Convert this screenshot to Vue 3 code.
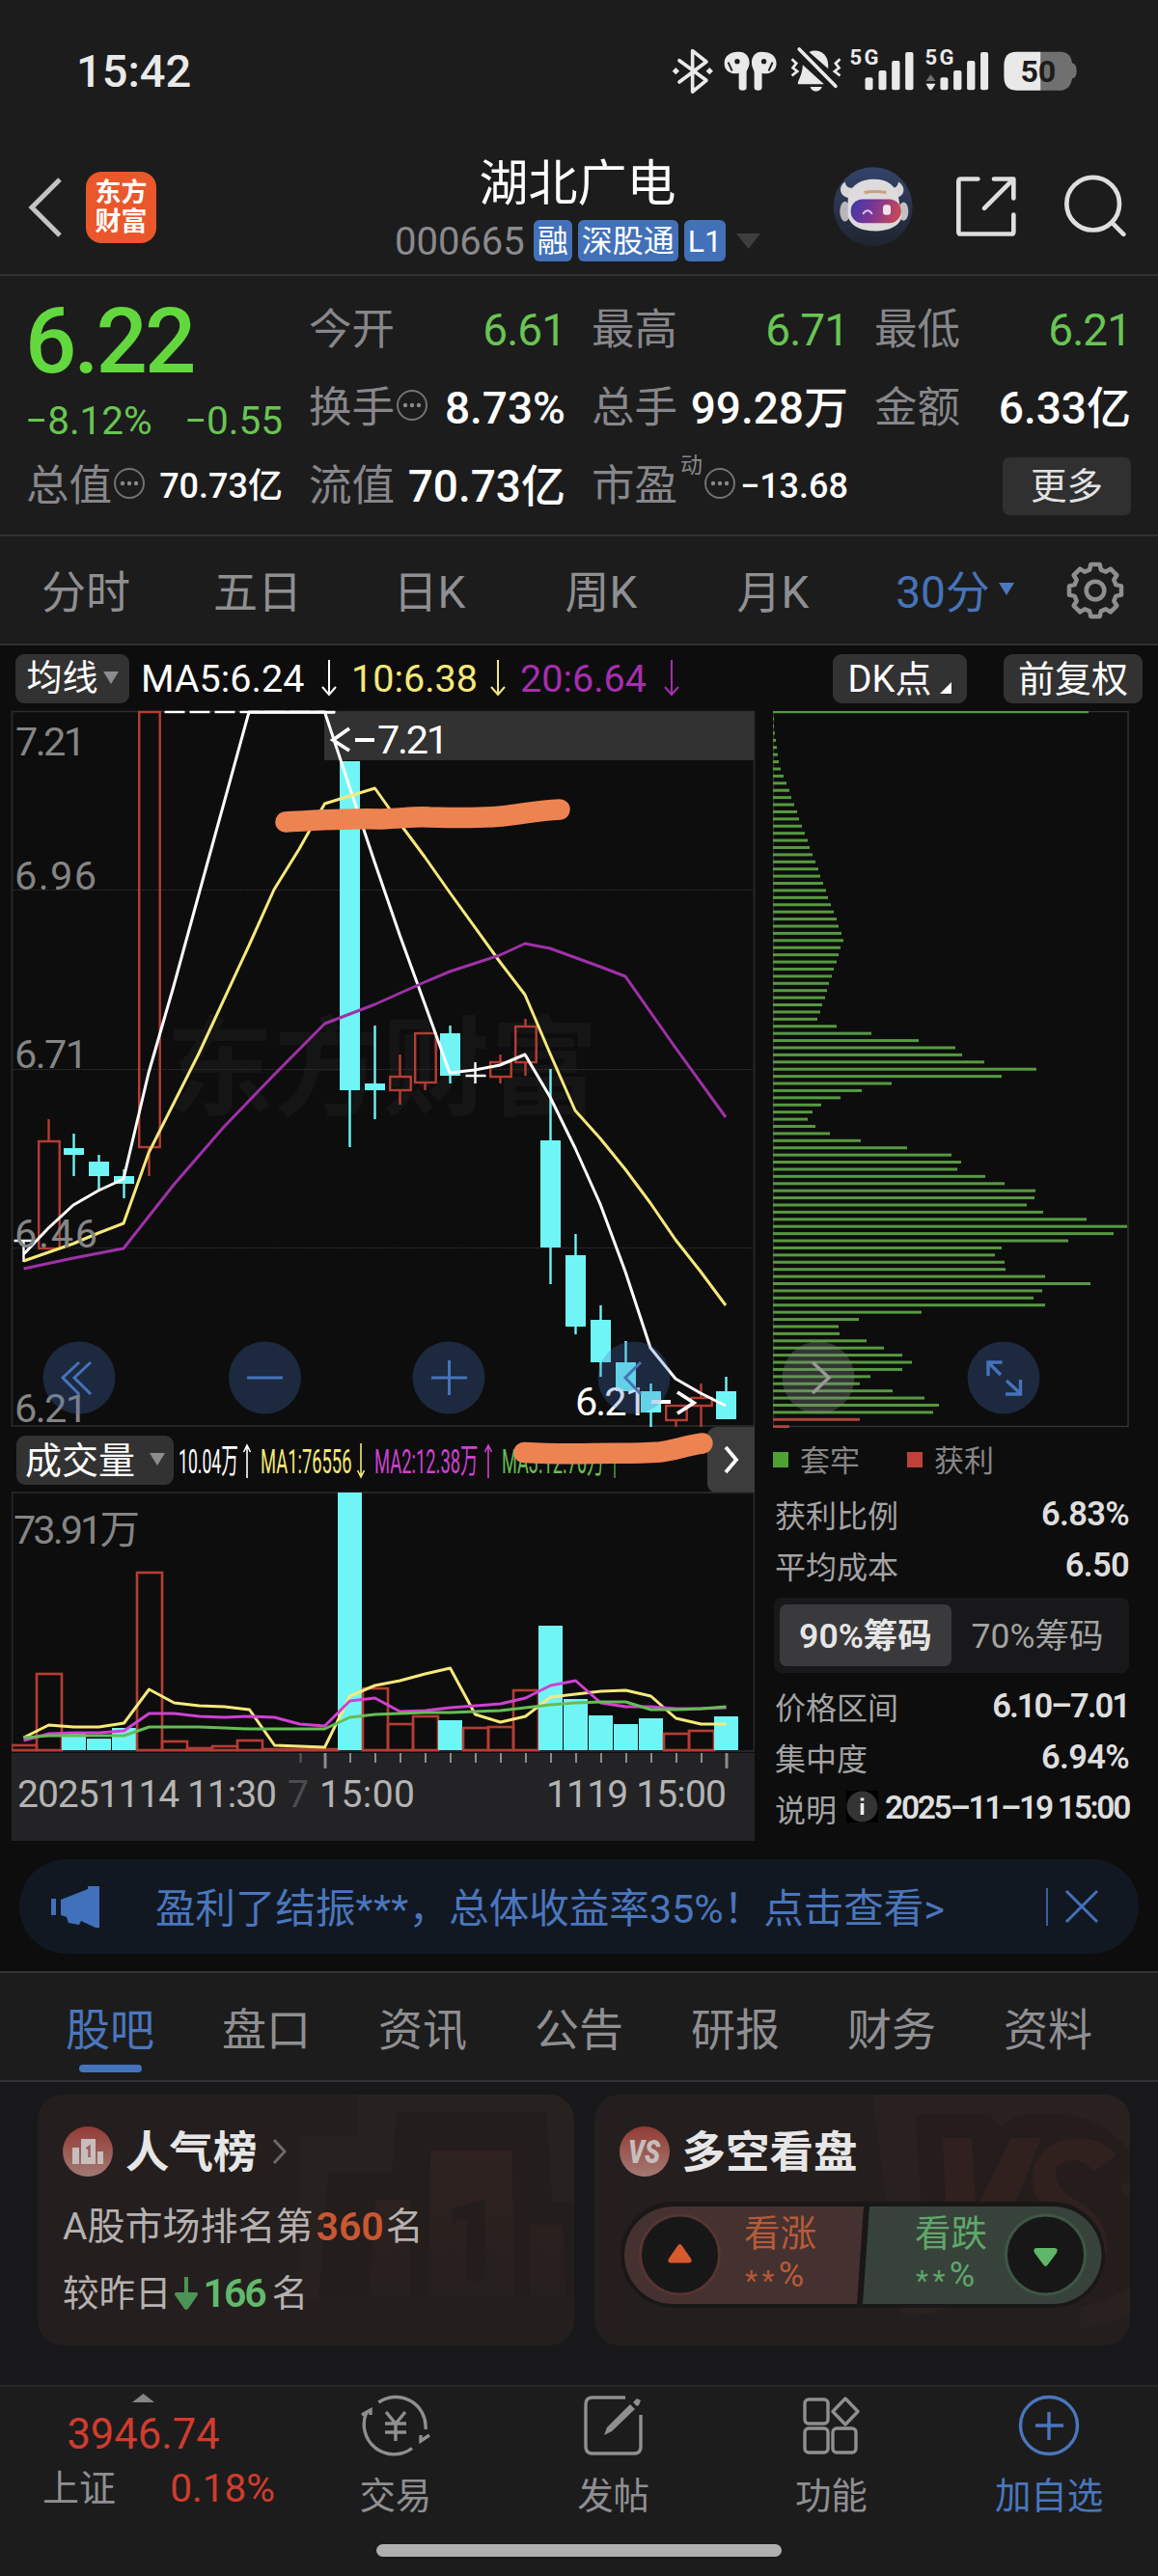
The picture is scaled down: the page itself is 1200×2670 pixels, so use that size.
<!-- StockDetail.vue -->
<template>
<div class="page">
    <!-- 狀態列 -->
    <div class="status-bar">
        <span class="clock">15:42</span>
        <svg class="status-icons" viewBox="40 80 1270 150">
            <g fill="none" stroke="#e9e9e9" stroke-width="11" stroke-linejoin="round" stroke-linecap="round">
                <path d="M70 124 L154 186 L111 221 V94 L154 128 L70 191" />
            </g>
            <path d="M48 157 l11 -11 11 11 -11 11z M153 157 l11 -11 11 11 -11 11z" fill="#e9e9e9" />
            <g fill="#e9e9e9">
                <path d="M210 133 C210 105 235 97 256 97 C276 97 288 112 288 130 C288 145 280 152 279 160 V208 Q279 217 267 217 Q255 217 255 208 V163 C240 168 210 162 210 133z" />
                <path d="M372 133 C372 105 347 97 326 97 C306 97 295 112 295 130 C295 145 302 152 303 160 V208 Q303 217 315 217 Q327 217 327 208 V163 C342 168 372 162 372 133z" />
                <circle cx="250" cy="127" r="8" fill="#1c1c1c" />
                <circle cx="333" cy="127" r="8" fill="#1c1c1c" />
                <path d="M222 130 L234 156 M360 130 L348 156" stroke="#1c1c1c" stroke-width="6" />
                <path d="M454 138 L520 198 H440 C434 192 452 176 454 138z" />
                <path d="M474 98 C502 84 533 104 533 138 V150z" />
                <path d="M477 206 H514 Q508 220 495 220 Q482 220 477 206z" />
                <path d="M443 89 L556 204" stroke="#e9e9e9" stroke-width="11" stroke-linecap="round" />
                <path d="M420 120 L434 133 L423 147 L437 158 L420 171 M570 120 L556 133 L567 147 L553 158 L570 171" fill="none" stroke="#e9e9e9" stroke-width="8" />
                <rect x="648" y="177" width="24" height="39" rx="6" />
                <rect x="690" y="155" width="24" height="61" rx="6" />
                <rect x="731" y="125" width="25" height="91" rx="6" />
                <rect x="773" y="98" width="25" height="118" rx="6" />
                <rect x="882" y="177" width="24" height="39" rx="6" />
                <rect x="923" y="155" width="25" height="61" rx="6" />
                <rect x="965" y="125" width="25" height="91" rx="6" />
                <rect x="1007" y="98" width="24" height="118" rx="6" />
                <path d="M837 188 L852 168 L867 188z" fill="#707070" />
                <path d="M837 196 H867 L858 212 Q852 221 846 212z" />
                <text x="600" y="136" class="net" textLength="90">5G</text>
                <text x="834" y="136" class="net" textLength="90">5G</text>
            </g>
            <path d="M1194 97 H1256 Q1288 97 1292 132 Q1306 134 1306 157 Q1306 178 1292 180 Q1286 217 1256 217 H1194z" fill="#707070" />
            <path d="M1194 97 H1118 Q1080 97 1080 140 V174 Q1080 217 1118 217 H1194z" fill="#e9e9e9" />
            <text x="1131" y="191" class="battery" textLength="111" lengthAdjust="spacingAndGlyphs">50</text>
        </svg>
    </div>

    <!-- 標題 -->
    <div class="header">
        <div class="header-left">
            <svg class="back" viewBox="0 0 36 62"><path d="M33 2 L4 31 L33 60" fill="none" stroke="#c4c4c4" stroke-width="5" /></svg>
            <div class="logo"><span>东方</span><span>财富</span></div>
        </div>
        <div class="header-title">
            <div class="stock-name">湖北广电</div>
            <div class="stock-sub">
                <span class="stock-code">000665</span>
                <span class="tag">融</span>
                <span class="tag">深股通</span>
                <span class="tag">L1</span>
                <svg class="drop" viewBox="0 0 25 16"><path d="M0 0 H25 L12.5 16z" fill="#3e3e3e" /></svg>
            </div>
        </div>
        <svg class="header-icons" viewBox="550 450 912 260">
            <defs>
                <linearGradient id="avatarBg" x1="0" y1="0" x2="0" y2="1">
                    <stop offset="0" stop-color="#33436a" />
                    <stop offset="1" stop-color="#1f242e" />
                </linearGradient>
                <linearGradient id="visor" x1="0" y1="0" x2="1" y2="0.2">
                    <stop offset="0" stop-color="#3a3aa8" />
                    <stop offset="0.5" stop-color="#7a3596" />
                    <stop offset="1" stop-color="#c2475a" />
                </linearGradient>
            </defs>
            <circle cx="675" cy="579" r="123" fill="url(#avatarBg)" />
            <path d="M588 502 C568 515 568 545 600 552 L616 520 C598 524 590 515 588 502z M754 502 C776 515 778 545 746 552 L728 520 C746 524 752 515 754 502z" fill="#d9d6d8" />
            <ellipse cx="588" cy="594" rx="16" ry="31" fill="#b9b6ba" />
            <ellipse cx="770" cy="594" rx="15" ry="29" fill="#c4c1c5" />
            <path d="M597 560 C600 515 635 494 678 494 C722 494 750 515 756 560 L764 610 C760 640 720 655 682 655 C640 655 605 640 597 610z" fill="#dedbdc" />
            <rect x="606" y="556" width="156" height="74" rx="36" fill="url(#visor)" />
            <path d="M648 535 Q682 529 716 535" stroke="#c9a07c" stroke-width="9" fill="none" />
            <path d="M645 600 Q658 583 671 600" stroke="#d9c9f0" stroke-width="6" fill="none" stroke-linecap="round" />
            <rect x="706" y="573" width="24" height="32" rx="9" fill="#f1e3ee" />
            <g fill="none" stroke="#dedede" stroke-width="14" stroke-linecap="round" stroke-linejoin="round">
                <path d="M1001 493 H948 Q941 493 941 500 V657 Q941 664 948 664 H1105 Q1112 664 1112 657 V604" />
                <path d="M1051 493 H1112 V553" />
                <path d="M1021 584 L1110 495" />
                <circle cx="1359" cy="570" r="82" />
                <path d="M1419 630 L1454 665" />
            </g>
        </svg>
    </div>

    <!-- 報價 -->
    <div class="quote">
        <div class="price-cell">
            <div class="price">6.22</div>
            <div class="change"><span>−8.12%</span><span>−0.55</span></div>
        </div>
        <div v-for="item in quotes" :key="item.label" class="quote-cell">
            <span class="quote-label">{{ item.label }}</span>
            <sup v-if="item.sup" class="quote-sup">{{ item.sup }}</sup>
            <svg v-if="item.dots" class="dots" viewBox="0 0 34 34">
                <circle cx="17" cy="17" r="15" fill="none" stroke="#737377" stroke-width="2" />
                <circle cx="10" cy="17" r="2.2" fill="#8a8a8e" />
                <circle cx="17" cy="17" r="2.2" fill="#8a8a8e" />
                <circle cx="24" cy="17" r="2.2" fill="#8a8a8e" />
            </svg>
            <span class="quote-value" :class="{ down: item.down, small: item.small }">{{ item.value }}</span>
        </div>
        <div class="more-cell"><span class="more">更多</span></div>
    </div>

    <!-- 週期 -->
    <div class="periods">
        <span v-for="p in periods" :key="p" class="period">{{ p }}</span>
        <span class="period active">30分
            <svg class="period-arrow" viewBox="0 0 16 13"><path d="M0 0 H16 L8 13z" fill="#4a78c0" /></svg>
        </span>
        <svg class="gear" viewBox="0 0 60 60">
            <path :d="gearPath" fill="none" stroke="#8f8f92" stroke-width="4.4" stroke-linejoin="round" />
            <circle cx="30" cy="30" r="9" fill="none" stroke="#8f8f92" stroke-width="4.4" />
        </svg>
    </div>

    <!-- 均線 -->
    <div class="ma-row">
        <span class="chip chip-ma">均线<svg class="chip-arrow" viewBox="0 0 16 13"><path d="M0 0 H16 L8 13z" fill="#8c8c90" /></svg></span>
        <span class="ma ma5">MA5:6.24</span>
        <svg class="ma-arrow" viewBox="0 0 16 38"><path d="M8 0 V36 M1 28 L8 36 L15 28" stroke="#fff" fill="none" stroke-width="2" /></svg>
        <span class="ma ma10">10:6.38</span>
        <svg class="ma-arrow" viewBox="0 0 16 38"><path d="M8 0 V36 M1 28 L8 36 L15 28" stroke="#f5e979" fill="none" stroke-width="2" /></svg>
        <span class="ma ma20">20:6.64</span>
        <svg class="ma-arrow" viewBox="0 0 16 38"><path d="M8 0 V36 M1 28 L8 36 L15 28" stroke="#a62fae" fill="none" stroke-width="2" /></svg>
        <span class="chip chip-dk">DK点<svg class="corner" viewBox="0 0 12 12"><path d="M12 0 V12 H0z" fill="#fff" /></svg></span>
        <span class="chip chip-fq">前复权</span>
    </div>

    <!-- 圖表 -->
    <div class="charts">
        <div class="chart-left">
            <svg class="kline" viewBox="12 737 770 743">
                <text x="172" y="1148" class="watermark" textLength="448">东方财富</text>
                <g stroke="#2e2e2e" stroke-width="1" stroke-dasharray="2 1">
                    <path d="M12 922.5 H781 M12 1108.5 H781 M12 1293.5 H781" />
                </g>
                <rect x="12.5" y="737.5" width="769" height="740.5" fill="none" stroke="#2c2c2c" stroke-width="1.6" />
                <rect x="336" y="738" width="445" height="50" fill="#323232" />
                <g v-for="(c, i) in candles" :key="i">
                    <template v-if="c[0] === 'u'">
                        <path :d="`M${cx(i)} ${c[3]} V${c[1]} M${cx(i)} ${c[2]} V${c[4]}`" stroke="#b53d33" stroke-width="2.4" />
                        <rect :x="cx(i) - 10.3" :y="c[1] + 1" width="21.5" :height="c[2] - c[1] - 2" fill="none" stroke="#b53d33" stroke-width="2.4" />
                    </template>
                    <template v-else-if="c[0] === 'd'">
                        <path :d="`M${cx(i)} ${c[3]} V${c[4]}`" stroke="#70f5f7" stroke-width="2.4" />
                        <rect :x="cx(i) - 10.5" :y="c[1]" width="21" :height="c[2] - c[1]" fill="#70f5f7" />
                    </template>
                    <path v-else :d="`M${cx(i) - 10} ${c[1]} h21 M${cx(i)} ${c[3]} V${c[4]}`" stroke="#fff" stroke-width="2.4" />
                </g>
                <g fill="none" stroke-width="3" stroke-linejoin="round">
                    <polyline :points="ma5" stroke="#fff" />
                    <polyline :points="ma10" stroke="#f7e97a" />
                    <polyline :points="ma20" stroke="#9f31a8" />
                </g>
                <path d="M258 738.5 H347" stroke="#fff" stroke-width="2.4" />
                <g class="axis">
                    <text x="16" y="783" textLength="73">7.21</text>
                    <text x="15" y="922" textLength="85">6.96</text>
                    <text x="15" y="1107" textLength="76">6.71</text>
                    <text x="15" y="1293" textLength="86">6.46</text>
                    <text x="15" y="1474" textLength="76">6.21</text>
                </g>
                <g class="mark">
                    <text x="391" y="781" textLength="74">7.21</text>
                    <text x="596" y="1467" textLength="75">6.21</text>
                    <path d="M362 755 L345 767 L362 778 M368 767 H388 M675 1453 H695 M702 1443 L719 1454 L702 1465" fill="none" stroke="#fff" stroke-width="3.8" />
                </g>
                <g v-for="x in [82, 274.5, 465, 657]" :key="x">
                    <circle :cx="x" cy="1428" r="37.5" fill="#4474be" fill-opacity="0.28" />
                </g>
                <g fill="none" stroke="#4573ba" stroke-width="3">
                    <path d="M82 1412 L65 1428 L82 1445 M94 1412 L77 1428 L94 1445" />
                    <path d="M256 1428 H293 M447 1428 H484 M465.5 1410 V1446" />
                    <path d="M664 1412 L648 1428 L664 1445" />
                </g>
            </svg>

            <div class="volume-row">
                <span class="chip chip-vol">成交量<svg class="chip-arrow" viewBox="0 0 16 13"><path d="M0 0 H16 L8 13z" fill="#8c8c90" /></svg></span>
                <svg class="volume-labels" viewBox="180 1480 553 66">
                    <text transform="translate(185 1527) scale(0.49 1)" fill="#fff">10.04万</text>
                    <text transform="translate(270 1527) scale(0.51 1)" fill="#f5e979">MA1:76556</text>
                    <text transform="translate(388 1527) scale(0.51 1)" fill="#cf41d2">MA2:12.38万</text>
                    <text transform="translate(520 1527) scale(0.505 1)" fill="#65bd55">MA3:12.70万</text>
                    <g fill="none" stroke-width="1.6">
                        <path d="M256 1532 V1498 M252.500 1505 L256 1498 L259.500 1505" stroke="#fff" />
                        <path d="M374 1496 V1531 M370.500 1524 L374 1531 L377.500 1524" stroke="#f5e979" />
                        <path d="M506 1532 V1498 M502.500 1505 L506 1498 L509.500 1505" stroke="#cf41d2" />
                        <path d="M637 1532 V1498 M633.500 1505 L637 1498 L640.500 1505" stroke="#4d8f42" />
                    </g>
                </svg>
                <span class="volume-more"><svg viewBox="0 0 16 30"><path d="M2 2 L13 15 L2 28" fill="none" stroke="#fff" stroke-width="3.8" /></svg></span>
            </div>

            <svg class="volume" viewBox="12 1546 770 362">
                <rect x="12.500" y="1547" width="769" height="268" fill="none" stroke="#2c2c2c" stroke-width="1.6" />
                <g v-for="(v, i) in volumes" :key="i">
                    <rect v-if="v[0] === 'd'" :x="12 + 26 * i" :y="v[1]" width="25" :height="1814 - v[1]" fill="#70f5f7" />
                    <rect v-else :x="12 + 26 * i" :y="v[1] + 1" width="26" :height="Math.max(1813 - v[1], 1)" fill="none" stroke="#b53d33" stroke-width="2.6" />
                </g>
                <g fill="none" stroke-width="3" stroke-linejoin="round">
                    <polyline :points="vol5" stroke="#f7e97a" />
                    <polyline :points="vol10" stroke="#cf41d2" />
                    <polyline :points="vol20" stroke="#65bd55" />
                </g>
                <text x="14" y="1600" class="axis" textLength="131">73.91万</text>
                <rect x="12" y="1817" width="770" height="91" fill="#232325" />
                <path d="M311.500 1817 V1827" stroke="#5a5a5a" stroke-width="2" />
                <path v-for="k in 15" :key="k" :d="`M${337 + 26 * k} 1817 V1827`" stroke="#8c8c8c" stroke-width="2" />
                <path d="M337 1817 V1833 M753 1817 V1833" stroke="#8c8c8c" stroke-width="3" />
                <g class="time">
                    <text x="18" y="1873" textLength="269">20251114 11:30</text>
                    <text x="298" y="1873" fill="#4c4c4e">7</text>
                    <text x="331" y="1873" textLength="99">15:00</text>
                    <text x="566" y="1873" textLength="187">1119 15:00</text>
                </g>
            </svg>

            <!-- 手繪標記 -->
            <svg class="marker" viewBox="12 737 770 1171">
                <path d="M296 852 C330 850 360 848 395 849 C420 848 430 846 445 847 C480 848 500 848 520 846 C545 843 560 840 580 839" />
                <path d="M543 1505.500 C570 1507 590 1507 615 1506.500 C640 1506 660 1507 684 1505 C700 1503 712 1498 728 1496" />
            </svg>
        </div>

        <div class="chart-right">
            <svg class="chips" viewBox="801 737 369 743">
                <rect x="801.500" y="737.500" width="367.500" height="741" fill="none" stroke="#333" stroke-width="1.4" />
                <rect
                    v-for="(w, i) in chipBars"
                    :key="i"
                    x="801"
                    :y="736.200 + 7.41 * i"
                    :width="w"
                    height="3"
                    :fill="i > 98 ? '#b0453b' : '#569a40'"
                />
                <circle cx="848" cy="1428" r="37.500" fill="#8a8a8a" fill-opacity="0.32" />
                <path d="M842 1412 L859 1428 L842 1444" fill="none" stroke="#9a9a9a" stroke-width="3.400" />
                <circle cx="1040" cy="1428" r="37.500" fill="#4474be" fill-opacity="0.28" />
                <path d="M1024 1426 V1412 H1038.500 M1025 1413 L1037 1425 M1057.500 1430 V1445 H1042 M1057 1444 L1043 1431" fill="none" stroke="#4573ba" stroke-width="3.400" />
            </svg>
            <div class="legend">
                <i class="green"></i><span>套牢</span>
                <i class="red"></i><span>获利</span>
            </div>
            <div class="stat"><span>获利比例</span><b>6.83%</b></div>
            <div class="stat"><span>平均成本</span><b>6.50</b></div>
            <div class="switch">
                <span class="switch-item on">90%筹码</span>
                <span class="switch-item">70%筹码</span>
            </div>
            <div class="stat"><span>价格区间</span><b class="range">6.10–7.01</b></div>
            <div class="stat"><span>集中度</span><b>6.94%</b></div>
            <div class="stat">
                <span>说明</span>
                <svg class="info" viewBox="0 0 33 33">
                    <rect width="33" height="33" fill="#000" />
                    <circle cx="16.500" cy="16.500" r="16" fill="#343434" />
                    <path d="M16.500 13 V25 M16.500 7.500 V10.500" stroke="#eee" stroke-width="3.600" />
                </svg>
                <b class="date">2025–11–19 15:00</b>
            </div>
        </div>
    </div>

    <!-- 公告條 -->
    <div class="notice-wrap">
        <div class="notice">
            <svg class="horn" viewBox="0 0 50 43">
                <path d="M0 13 H5 V30 H0z M10 14 L38 3 V0 H50 V43 H46 L31 36 L29 40 L18 38 L16 32 L10 30z" fill="#4271bb" />
            </svg>
            <span class="notice-text">盈利了结振<span class="stars">***</span>，总体收益率35%！点击查看&gt;</span>
            <i class="notice-line"></i>
            <svg class="close" viewBox="0 0 36 36"><path d="M2 2 L34 34 M34 2 L2 34" stroke="#4271bb" stroke-width="3" /></svg>
        </div>
    </div>

    <!-- 分頁 -->
    <div class="tabs">
        <span v-for="(t, i) in tabs" :key="t" class="tab" :class="{ active: i === 0 }">{{ t }}</span>
    </div>

    <!-- 卡片 -->
    <div class="cards">
        <div class="card">
            <svg class="card-bg" viewBox="39 2171 555 260">
                <path d="M310 2213 H370 V2171 H594 V2384 H310z" fill="#272120" />
                <path d="M340 2252 H406 L411 2189 H566 L572 2282 H594 V2384 H330z" fill="#231d1c" />
                <path d="M389 2280 H425 V2384 H382z M446 2229 H530 L533 2384 H443z M549 2306 H583 L586 2384 H549z" fill="url(#podium)" />
                <path d="M468 2290 L502 2279 V2365 H484 V2299 L468 2304z" fill="#231d1c" />
            </svg>
            <div class="card-title">
                <svg class="card-icon" viewBox="0 0 52 52">
                    <defs>
                        <linearGradient id="redBall" x1="0" y1="0" x2="0" y2="1">
                            <stop offset="0" stop-color="#933b35" />
                            <stop offset="1" stop-color="#a37973" />
                        </linearGradient>
                        <linearGradient id="podium" x1="0" y1="0" x2="0" y2="1">
                            <stop offset="0" stop-color="#2f2220" />
                            <stop offset="1" stop-color="#251f1e" />
                        </linearGradient>
                    </defs>
                    <circle cx="26" cy="26" r="26" fill="url(#redBall)" />
                    <path d="M10 22 H17 V39 H10z M19 13 H34 V39 H19z M36 26 H42 V39 H36z" fill="#c6bebc" />
                    <path d="M24.500 23 L27.500 21 V32" fill="none" stroke="#9a5d57" stroke-width="2.500" />
                </svg>
                <span>人气榜</span>
                <svg class="card-arrow" viewBox="0 0 16 26"><path d="M2 1 L13 13 L2 25" fill="none" stroke="#6c6868" stroke-width="3" /></svg>
            </div>
            <div class="card-line">A股市场排名第<b class="orange">360</b>名</div>
            <div class="card-line second">较昨日<svg class="down-arrow" viewBox="0 0 24 34"><path d="M10 0 H14 V16 H23 Q25 18 23 20 L14 33 Q12 35 10 33 L1 20 Q-1 18 1 16 H10z" fill="#4c9356" /></svg><b class="lime">166</b>名</div>
        </div>
        <div class="card">
            <svg class="card-bg" viewBox="615 2171 556 260">
                <path d="M903 2171 H1171 V2398 Q1150 2410 1119 2414 V2330 H1040 L975 2397 L933 2400z" fill="#282120" />
                <path d="M948 2192 H1025 L1036 2205 Q1050 2190 1080 2190 Q1140 2190 1171 2230 V2260 Q1150 2268 1171 2280 V2370 Q1150 2385 1119 2390 H960z" fill="#241d1c" />
                <path d="M976 2216 H1006 L1011 2290 L1047 2216 H1078 L1022 2360 H984z" fill="#30211f" />
                <path d="M1156 2234 L1133 2250 Q1115 2230 1095 2245 Q1088 2262 1110 2278 Q1152 2300 1146 2335 Q1130 2370 1080 2360 L1062 2310 Q1080 2330 1100 2318 Q1106 2305 1090 2295 Q1062 2275 1072 2243 Q1085 2216 1120 2216 Q1145 2218 1156 2234z" fill="#30211f" />
            </svg>
            <div class="card-title">
                <svg class="card-icon" viewBox="0 0 52 52">
                    <circle cx="26" cy="26" r="26" fill="url(#redBall)" />
                    <text x="9" y="38" class="vs" textLength="33" lengthAdjust="spacingAndGlyphs">VS</text>
                </svg>
                <span>多空看盘</span>
            </div>
            <svg class="vote" viewBox="642 2282 502 110">
                <rect x="642" y="2282" width="502" height="110" rx="55" fill="#191717" />
                <path d="M894 2287 L887 2388 H696.500 A50.500 50.500 0 0 1 696.500 2287z" fill="#453130" />
                <path d="M900 2287 L893 2388 H1090 A50.500 50.500 0 0 0 1090 2287z" fill="#37433a" />
                <circle cx="703.500" cy="2337" r="41" fill="#171718" stroke="#553532" stroke-width="3" />
                <circle cx="1082.500" cy="2337" r="41" fill="#171718" stroke="#3e5745" stroke-width="3" />
                <path d="M701 2328 Q703.500 2324 706 2328 L715 2341 Q717 2345 713 2345.500 H694 Q690 2345 692 2341z" fill="#d65b2c" />
                <path d="M1080 2347 Q1082.500 2351 1085 2347 L1094 2335 Q1096 2330.500 1092 2330 H1073 Q1069 2330.500 1071 2335z" fill="#5fb668" />
                <g class="vote-text">
                    <text x="770" y="2328" fill="#b65b38">看涨</text>
                    <text x="771" y="2370" fill="#b65b38" class="pct"><tspan dy="4" class="pct-star">**</tspan><tspan dy="-4">%</tspan></text>
                    <text x="947" y="2328" fill="#5fa76a">看跌</text>
                    <text x="948" y="2370" fill="#5fa76a" class="pct"><tspan dy="4" class="pct-star">**</tspan><tspan dy="-4">%</tspan></text>
                </g>
            </svg>
        </div>
    </div>

    <!-- 底部導航 -->
    <div class="bottom">
        <div class="nav">
            <div class="index">
                <svg class="index-up" viewBox="0 0 23 9"><path d="M0 9 H23 L11.500 0z" fill="#858585" /></svg>
                <div class="index-value">3946.74</div>
                <div class="index-row"><span>上证</span><span class="index-pct">0.18%</span></div>
            </div>
            <div class="nav-item">
                <svg viewBox="0 0 72 72">
                    <path d="M18.400 12 A31 31 0 0 1 67 40 M53 59.500 A31 31 0 0 1 6 22" />
                    <path d="M1 25 L10 20 V25 M71 46 L62 52 V46" />
                    <path d="M26 22 L36 34 L46 22 M36 34 V52 M25 34 H47 M25 43 H47" />
                </svg>
                <span>交易</span>
            </div>
            <div class="nav-item">
                <svg viewBox="0 0 72 72">
                    <path d="M48 7 H14 Q7 7 7 14 V58 Q7 65 14 65 H57 Q64 65 64 58 V25" />
                    <path d="M26 46 L29 38 L53 14 L58 19 L34 42z M56 12 L60 8 L64 10 L62 15 L60 16z" class="solid" />
                </svg>
                <span>发帖</span>
            </div>
            <div class="nav-item">
                <svg viewBox="0 0 72 72">
                    <rect x="9" y="9" width="24" height="25" rx="4" />
                    <rect x="9" y="39" width="24" height="25" rx="4" />
                    <rect x="38" y="39" width="24" height="25" rx="4" />
                    <path d="M51 8 L64 21.500 L51 35 L38 21.500z" stroke-linejoin="round" />
                </svg>
                <span>功能</span>
            </div>
            <div class="nav-item blue">
                <svg viewBox="0 0 72 72">
                    <circle cx="36" cy="36" r="29.500" />
                    <path d="M22 36 H51 M36 22 V51" />
                </svg>
                <span>加自选</span>
            </div>
        </div>
        <div class="home-bar"></div>
    </div>
</div>
</template>

<script setup>
const quotes = [
    { label: '今开', value: '6.61', down: true },
    { label: '最高', value: '6.71', down: true },
    { label: '最低', value: '6.21', down: true },
    { label: '换手', value: '8.73%', dots: true },
    { label: '总手', value: '99.28万' },
    { label: '金额', value: '6.33亿' },
    { label: '总值', value: '70.73亿', dots: true, small: true },
    { label: '流值', value: '70.73亿' },
    { label: '市盈', value: '−13.68', sup: '动', dots: true, small: true }
]

const periods = ['分时', '五日', '日K', '周K', '月K']
const tabs = ['股吧', '盘口', '资讯', '公告', '研报', '财务', '资料']

// K 線中心 x
const cx = (i) => 24.5 + 26 * i

// [類型, 實體上, 實體下, 影線上, 影線下]
const candles = [
    ['x', 1286, 1286, 1286, 1308],
    ['u', 1182, 1295, 1160, 1295],
    ['d', 1190, 1197, 1175, 1219],
    ['d', 1204, 1219, 1197, 1233],
    ['d', 1219, 1227, 1212, 1242],
    ['u', 737, 1190, 737, 1219],
    ['x', 738, 738, 738, 738],
    ['x', 738, 738, 738, 738],
    ['x', 738, 738, 738, 738],
    ['x', 738, 738, 738, 738],
    ['x', 738, 738, 738, 738],
    ['x', 738, 738, 738, 738],
    ['x', 738, 738, 738, 738],
    ['d', 789, 1130, 789, 1189],
    ['d', 1123, 1130, 1063, 1160],
    ['u', 1115, 1131, 1093, 1145],
    ['u', 1070, 1123, 1070, 1130],
    ['d', 1071, 1115, 1063, 1123],
    ['x', 1115, 1115, 1101, 1123],
    ['u', 1100, 1117, 1093, 1123],
    ['u', 1063, 1102, 1056, 1115],
    ['d', 1182, 1293, 1108, 1331],
    ['d', 1301, 1375, 1279, 1383],
    ['d', 1368, 1412, 1353, 1427],
    ['d', 1412, 1442, 1390, 1442],
    ['d', 1442, 1464, 1434, 1479],
    ['u', 1456, 1473, 1456, 1479],
    ['u', 1448, 1458, 1434, 1479],
    ['d', 1442, 1471, 1427, 1471]
]

const ma5 = '24.500,1300 50,1273 76,1249 102,1234 128,1222 154,1112 180,1022 206,927 258,738 336.500,738 362,815 388,893 414.500,970 440,1040 466,1112 492,1109 518,1104 544,1093 570,1137 596,1190 622,1248 648,1318 674,1397 700,1429 726,1444 752,1457'
const ma10 = '24.500,1307 76,1289 102,1278 128,1268 154,1195 206,1092 258,980 284,922 310,880 336.500,833 388.500,817 414,853 440,888 466,925 518,997 544,1031 570,1092 596,1151 622,1180 648,1212 674,1247 700,1285 726,1318 752,1353'
const ma20 = '24.500,1315 76,1304 128,1294 180,1228 232,1168 284,1114 336.500,1061 388.500,1041 440,1018 466,1007 518,990 544,978 570,983 622,1002 648,1012 700,1086 752,1158'

const volumes = [
    ['u', 1808], ['u', 1734], ['d', 1797], ['d', 1802], ['d', 1791], ['u', 1629],
    ['u', 1804], ['u', 1811], ['u', 1809], ['u', 1803], ['u', 1812], ['u', 1812],
    ['u', 1812], ['d', 1547], ['u', 1749], ['u', 1786], ['u', 1778], ['d', 1783],
    ['u', 1790], ['u', 1789], ['u', 1751], ['d', 1685], ['d', 1761], ['d', 1778],
    ['d', 1787], ['d', 1781], ['u', 1796], ['u', 1793], ['d', 1779]
]

const toPoints = (ys) => ys.map((y, i) => `${cx(i)},${y}`).join(' ')
const vol5 = toPoints([1801, 1788, 1790, 1790, 1786, 1751, 1765, 1768, 1769, 1772, 1809, 1810, 1811, 1758, 1747, 1742, 1735, 1729, 1777, 1785, 1779, 1759, 1756, 1753, 1752, 1758, 1781, 1787, 1787])
const vol10 = toPoints([1804, 1797, 1796, 1796, 1794, 1776, 1776, 1779, 1780, 1779, 1780, 1787, 1789, 1763, 1760, 1774, 1773, 1770, 1768, 1766, 1760, 1747, 1742, 1765, 1769, 1769, 1771, 1771, 1770])
const vol20 = toPoints([1801, 1799, 1799, 1799, 1799, 1790, 1790, 1790, 1791, 1792, 1792, 1792, 1792, 1780, 1777, 1776, 1775, 1775, 1774, 1773, 1770, 1767, 1765, 1764, 1764, 1772, 1772, 1771, 1769])

// 籌碼分布
const chipBars = [
    327, 1, 1, 2, 3, 4, 5, 6, 8, 11, 14, 17, 19, 22, 25, 27, 30, 33, 36, 38,
    41, 44, 47, 49, 52, 55, 57, 60, 63, 66, 68, 71, 73, 70, 68, 66, 63, 61, 58, 56,
    54, 51, 49, 46, 66, 102, 151, 189, 196, 219, 273, 237, 123, 92, 70, 50, 41, 36, 44, 59,
    91, 139, 185, 195, 191, 220, 240, 272, 271, 263, 280, 325, 367, 353, 306, 237, 230, 240, 241, 282,
    329, 279, 270, 282, 154, 89, 68, 69, 97, 115, 134, 144, 134, 101, 90, 124, 157, 172, 166, 90, 17
]

// 齒輪外框
const gearPath = (() => {
    const pts = []
    for (let i = 0; i < 8; i++) {
        const a = (i * Math.PI) / 4 - Math.PI / 2
        for (const [r, d] of [[21.5, -0.27], [26.5, -0.17], [26.5, 0.17], [21.5, 0.27]]) {
            pts.push(`${(30 + r * Math.cos(a + d)).toFixed(1)} ${(30 + r * Math.sin(a + d)).toFixed(1)}`)
        }
    }
    return `M${pts.join(' L')} Z`
})()
</script>

<style>
body {
margin: 0;
background: #1c1c1c;
}
</style>

<style scoped>
.page {
width: 1200px;
height: 2670px;
overflow: hidden;
background: #1c1c1c;
color: #fff;
font-family: Roboto, "Noto Sans CJK SC", sans-serif;
}

.page * {
box-sizing: border-box;
}

svg {
display: block;
flex: none;
}

.status-bar {
height: 145px;
padding: 0 83px 0 79px;
display: flex;
align-items: center;
justify-content: space-between;
}

.clock {
font-size: 47px;
font-weight: 500;
line-height: 60px;
color: #e9e9e9;
padding-top: 2px;
}

.status-icons {
width: 423px;
height: 50px;
}

.net {
font-size: 66px;
font-weight: 700;
}

.battery {
font-size: 92px;
font-weight: 700;
fill: #1c1c1c;
}

.header {
height: 141px;
padding: 0 33px 0 29px;
border-bottom: 2px solid #303030;
display: grid;
grid-template-columns: 1fr auto 1fr;
align-items: center;
}

.header-left {
display: flex;
align-items: center;
gap: 24px;
}

.back {
width: 36px;
height: 62px;
}

.logo {
width: 73px;
height: 74px;
border-radius: 16px;
background: #e9572b;
display: flex;
flex-direction: column;
align-items: center;
justify-content: center;
font-size: 27px;
font-weight: 700;
line-height: 30px;
}

.header-title {
display: flex;
flex-direction: column;
align-items: center;
gap: 6px;
padding: 4px 0 0 1px;
}

.stock-name {
font-size: 51px;
line-height: 60px;
}

.stock-sub {
display: flex;
align-items: center;
gap: 6px;
}

.stock-code {
font-size: 40px;
line-height: 43px;
color: #8a8a8e;
padding: 2px 3px 0 0;
}

.tag {
height: 43px;
line-height: 44px;
padding: 0 4px;
border-radius: 6px;
background: #4271b9;
font-size: 32px;
}

.drop {
width: 25px;
height: 16px;
margin-left: 5px;
}

.header-icons {
width: 304px;
height: 87px;
justify-self: end;
}

.quote {
height: 270px;
padding: 15px 28px 0 28px;
border-bottom: 2px solid #303030;
display: grid;
grid-template-columns: repeat(4, 265px);
grid-template-rows: repeat(3, 81px);
column-gap: 28px;
}

.price-cell {
grid-row: span 2;
}

.price {
margin: 13px 0 0 -2px;
font-size: 94px;
font-weight: 500;
line-height: 80px;
letter-spacing: -3px;
color: #63d83e;
}

.change {
margin: 17px 0 0 -2px;
display: flex;
justify-content: space-between;
font-size: 40.5px;
line-height: 50px;
color: #69c553;
}

.quote-cell {
display: flex;
align-items: center;
line-height: 60px;
white-space: nowrap;
}

.quote-label {
font-size: 44.5px;
margin-left: -1px;
color: #87878b;
}

.quote-sup {
align-self: flex-start;
margin: 6px 0 0 3px;
font-size: 23px;
line-height: 28px;
color: #87878b;
}

.dots {
width: 34px;
height: 34px;
margin: -6px 0 0 1px;
}

.quote-value {
margin-left: auto;
font-size: 46px;
font-weight: 500;
}

.quote-value.down {
color: #69c553;
font-weight: 400;
letter-spacing: -1px;
}

.quote-value.small {
font-size: 36px;
}

.more-cell {
display: flex;
align-items: center;
justify-content: flex-end;
}

.more {
width: 133px;
height: 60px;
border-radius: 7px;
background: #303030;
text-align: center;
font-size: 37.5px;
line-height: 60px;
color: #e2e2e2;
}

.periods {
height: 113px;
border-bottom: 2px solid #303030;
display: flex;
align-items: center;
}

.period {
width: 178px;
padding-top: 4px;
text-align: center;
font-size: 46px;
line-height: 60px;
color: #8f8f92;
}

.period.active {
width: 202px;
display: flex;
align-items: center;
justify-content: center;
gap: 9px;
color: #4773b8;
}

.period-arrow {
width: 16px;
height: 13px;
margin: -6px 3px 0 0;
}

.gear {
width: 62px;
height: 62px;
margin-left: 12px;
}

.ma-row {
height: 68px;
padding: 0 16px;
background: #0d0d0d;
display: flex;
align-items: center;
}

.chip {
height: 51px;
border-radius: 9px;
background: #323232;
display: flex;
align-items: center;
justify-content: center;
font-size: 37px;
line-height: 50px;
padding-top: 2px;
white-space: nowrap;
}

.chip-ma {
width: 118px;
gap: 5px;
}

.chip-arrow {
width: 16px;
height: 13px;
margin-top: -4px;
}

.chip-dk {
width: 139px;
margin-left: auto;
gap: 9px;
font-size: 38px;
}

.corner {
width: 12px;
height: 12px;
margin-top: 18px;
}

.chip-fq {
width: 144px;
margin-left: 38px;
font-size: 38px;
}

.ma {
font-size: 39.5px;
line-height: 50px;
padding-top: 2px;
white-space: nowrap;
}

.ma-arrow {
width: 16px;
height: 38px;
}

.ma5 {
width: 187px;
margin-left: 12px;
}

.ma10 {
width: 144px;
margin-left: 15px;
color: #f5e979;
}

.ma20 {
width: 149px;
margin-left: 15px;
color: #a62fae;
}

.charts {
height: 1171px;
padding-left: 12px;
background: #0d0d0d;
display: flex;
}

.chart-left {
position: relative;
width: 770px;
}

.kline {
width: 770px;
height: 743px;
overflow: visible;
}

.watermark {
font-size: 112px;
font-weight: 700;
fill: #151515;
}

.axis {
font-size: 41.5px;
fill: #858585;
}

.mark {
font-size: 41.5px;
fill: #fff;
}

.volume-row {
height: 66px;
display: flex;
align-items: center;
}

.chip-vol {
width: 163px;
margin-left: 5px;
gap: 15px;
font-size: 38px;
}

.volume-labels {
width: 553px;
height: 66px;
font-size: 36px;
}

.volume-more {
width: 49px;
height: 68px;
border-radius: 9px 0 0 9px;
background: #3c3c3c;
display: flex;
align-items: center;
justify-content: center;
}

.volume-more svg {
width: 16px;
height: 30px;
}

.volume {
width: 770px;
height: 362px;
}

.time {
font-size: 39px;
fill: #b4b4b4;
}

.marker {
position: absolute;
left: 0;
top: 0;
width: 770px;
height: 1171px;
fill: none;
stroke: #ee8352;
stroke-width: 21.5px;
stroke-linecap: round;
}

.chart-right {
width: 369px;
margin-left: 19px;
}

.chips {
width: 369px;
height: 743px;
}

.legend {
height: 62px;
padding-top: 4px;
display: flex;
align-items: center;
font-size: 31px;
line-height: 40px;
color: #868686;
}

.legend i {
width: 16px;
height: 16px;
}

.legend span {
margin: 4px 49px 0 12px;
}

.green {
background: #4ea234;
}

.red {
background: #be4239;
}

.stat {
height: 53px;
padding-left: 2px;
display: flex;
align-items: center;
font-size: 32px;
color: #a3a3a3;
white-space: nowrap;
}

.stat b {
margin-left: auto;
font-size: 34.5px;
font-weight: 600;
letter-spacing: -0.7px;
color: #dedede;
}

.stat .range {
letter-spacing: -2px;
}

.stat .date {
font-size: 33.5px;
letter-spacing: -2.3px;
}

.info {
width: 33px;
height: 33px;
margin: -3px 0 0 10px;
}

.switch {
height: 78px;
margin: 8px 0 7px 1px;
padding: 7px 6px;
border-radius: 8px;
background: #18181a;
display: flex;
}

.switch-item {
flex: 1;
border-radius: 7px;
text-align: center;
font-size: 35.5px;
line-height: 66px;
color: #a3a3a3;
}

.switch-item.on {
background: #3a3a3c;
font-weight: 600;
color: #e6e6e6;
}

.notice-wrap {
height: 135px;
padding: 19px 20px 0;
background: #0d0d0d;
}

.notice {
height: 98px;
padding: 0 41px 0 33px;
border-radius: 49px;
background: #121821;
display: flex;
align-items: center;
}

.horn {
width: 50px;
height: 43px;
}

.notice-text {
margin: 6px 0 0 58px;
font-size: 41.5px;
line-height: 60px;
white-space: nowrap;
color: #4a76bd;
}

.stars {
letter-spacing: 0.5px;
}

.notice-line {
width: 2px;
height: 39px;
margin-left: auto;
background: #38609c;
}

.close {
width: 36px;
height: 36px;
margin-left: 17px;
}

.tabs {
height: 115px;
padding: 0 33px;
border-top: 2px solid #333;
border-bottom: 2px solid #333;
display: flex;
}

.tab {
width: 162px;
text-align: center;
font-size: 46px;
line-height: 60px;
padding-top: 29px;
color: #8f8f92;
}

.tab.active {
color: #4a76bd;
}

.tab.active::after {
content: "";
display: block;
width: 65px;
height: 8px;
margin: 6px auto 0;
border-radius: 4px;
background: #4474bd;
}

.cards {
height: 314px;
padding: 13px 29px 0 39px;
background: #18181a;
display: flex;
gap: 21px;
}

.card {
position: relative;
flex: 1;
height: 260px;
padding: 33px 26px 0;
border-radius: 26px;
background: #241f1e;
overflow: hidden;
}

.card-bg {
position: absolute;
left: 0;
top: 0;
width: 100%;
height: 100%;
}

.card-title {
position: relative;
height: 52px;
display: flex;
align-items: center;
font-size: 45.5px;
font-weight: 700;
line-height: 52px;
color: #e6e6e6;
}

.card-title span {
margin: 4px 0 0 13px;
}

.card-icon {
width: 52px;
height: 52px;
}

.vs {
font-size: 34px;
font-weight: 900;
font-style: italic;
fill: #c6bebc;
}

.card-arrow {
width: 16px;
height: 26px;
margin-left: 15px;
}

.card-line {
position: relative;
display: flex;
align-items: center;
margin-top: 27px;
height: 50px;
font-size: 39px;
line-height: 50px;
color: #b5b1b0;
}

.card-line.second {
margin-top: 19px;
font-size: 37.5px;
}

.card-line b {
font-size: 41px;
font-weight: 600;
}

.card-line .orange {
margin: 0 2px 0 3px;
color: #c95732;
}

.down-arrow {
width: 24px;
height: 34px;
margin: 0 6px 0 3px;
}

.card-line .lime {
color: #62b96c;
letter-spacing: -2px;
margin-right: 7px;
}

.vote {
position: relative;
width: 502px;
height: 110px;
margin: 26px 0 0 1px;
}

.vote-text {
font-size: 37.5px;
}

.pct {
font-size: 36px;
}

.pct-star {
font-size: 30px;
letter-spacing: 4.5px;
}

.bottom {
height: 198px;
border-top: 2px solid #282828;
}

.nav {
height: 163px;
display: flex;
}

.index {
width: 297px;
display: flex;
flex-direction: column;
align-items: center;
}

.index-up {
width: 23px;
height: 9px;
margin-top: 7px;
}

.index-value {
margin-top: 8px;
font-size: 43.5px;
line-height: 52px;
color: #d03c2d;
}

.index-row {
width: 240px;
display: flex;
justify-content: space-between;
margin: 3px 0 0 33px;
align-self: flex-start;
font-size: 38px;
line-height: 52px;
color: #8f8f92;
padding-left: 11px;
}

.index-pct {
font-size: 40.5px;
color: #d03c2d;
margin-right: -12px;
}

.nav-item {
flex: 1;
display: flex;
flex-direction: column;
align-items: center;
font-size: 37.5px;
color: #8f8f92;
}

.nav-item svg {
width: 72px;
height: 72px;
margin-top: 4px;
fill: none;
stroke: #8f8f92;
stroke-width: 3.4px;
}

.nav-item .solid {
fill: #8f8f92;
stroke: none;
}

.nav-item span {
margin-top: 12px;
line-height: 50px;
}

.nav-item.blue {
color: #4a76bd;
}

.nav-item.blue svg {
stroke: #4a76bd;
}

.home-bar {
width: 420px;
height: 13px;
margin: 0 auto;
border-radius: 7px;
background: #b0b0b0;
}
</style>
